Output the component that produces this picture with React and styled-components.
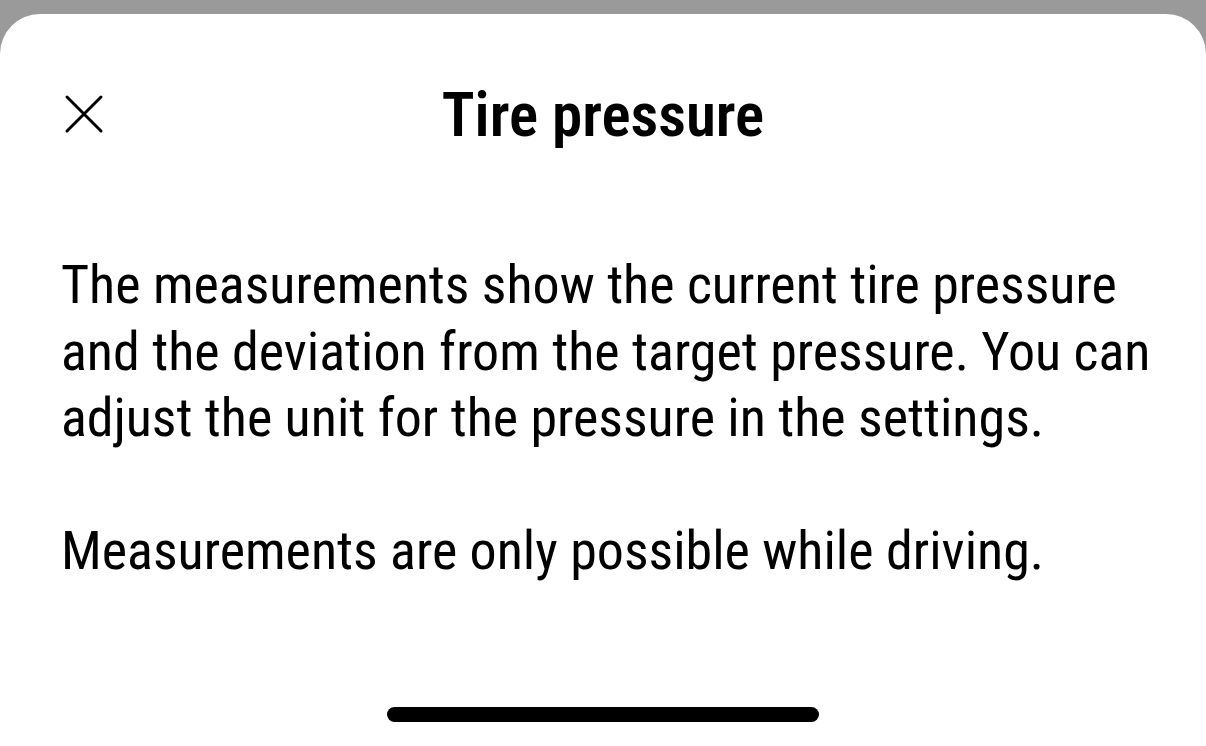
import React from 'react'
import styled, { createGlobalStyle } from "styled-components"

const Global = createGlobalStyle`
  html, body {
    margin: 0;
    padding: 0;
    background: #9a9a9a;
  }
`;

const Sheet = styled.div`
  margin-top: 14px;
  height: 732px;
  background: #ffffff;
  border-radius: 40px 40px 0 0;
  display: flex;
  flex-direction: column;
  box-sizing: border-box;
  padding: 67px 0 24px;
  font-family: "Roboto Condensed", Roboto, sans-serif;
  font-stretch: condensed;
  color: #000;
`;

const Header = styled.div`
  display: grid;
  grid-template-columns: 1fr auto 1fr;
  align-items: center;
  height: 70px;
  padding: 0 64px;
`;

const CloseButton = styled.button`
  justify-self: start;
  width: 40px;
  height: 40px;
  padding: 0;
  border: none;
  background: transparent;
  cursor: pointer;
  display: flex;
  margin-top: -4px;
`;

const Title = styled.h1`
  margin: -2px 0 0;
  font-size: 61px;
  line-height: 1;
  font-weight: 600;
`;

const Body = styled.div`
  padding: 101px 40px 0 61px;
  font-size: 54px;
  line-height: 66.5px;
`;

const Paragraph = styled.p`
  margin: 0 0 66.5px;
  white-space: nowrap;
`;

const HomeIndicator = styled.div`
  margin: auto auto 0;
  width: 432px;
  height: 15px;
  border-radius: 8px;
  background: #000;
`;

export default function App() {
  return (
    <>
      <Global />
      <Sheet>
        <Header>
          <CloseButton aria-label="Close">
            <svg width="40" height="40" viewBox="0 0 40 40">
              <path d="M3 3 L37 37 M37 3 L3 37" stroke="#000" strokeWidth="3" strokeLinecap="round" fill="none" />
            </svg>
          </CloseButton>
          <Title>Tire pressure</Title>
          <span />
        </Header>
        <Body>
          <Paragraph>
            The measurements show the current tire pressure<br />
            and the deviation from the target pressure. You can<br />
            adjust the unit for the pressure in the settings.
          </Paragraph>
          <Paragraph>Measurements are only possible while driving.</Paragraph>
        </Body>
        <HomeIndicator />
      </Sheet>
    </>
  );
}
